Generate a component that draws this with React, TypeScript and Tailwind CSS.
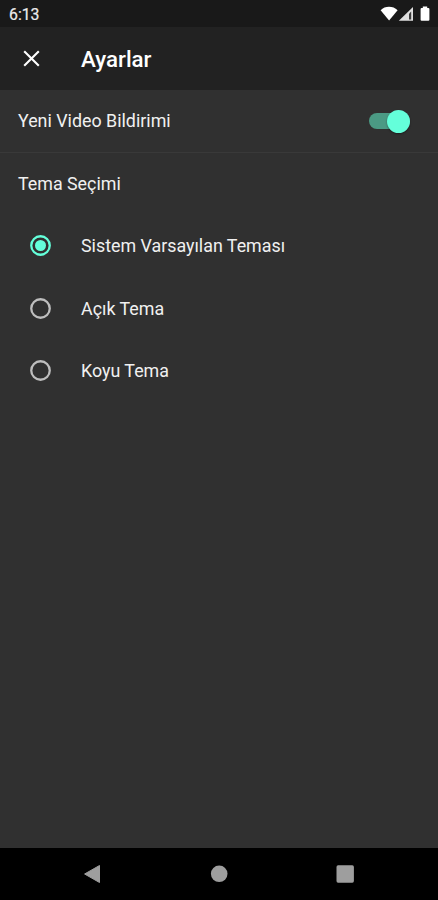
import { useState } from "react";

const themes = [
  { id: "system", label: "Sistem Varsayılan Teması" },
  { id: "light", label: "Açık Tema" },
  { id: "dark", label: "Koyu Tema" },
];

function StatusBar() {
  return (
    <div className="flex h-[27px] shrink-0 items-center justify-between bg-[#191919] pl-[9px] pr-2">
      <span className="pt-[3px] text-[15.8px] leading-none text-[#ececec] [-webkit-text-stroke:0.2px_#ececec]">
        6:13
      </span>
      <svg className="h-[27px] w-[50px]" viewBox="0 0 50 27" fill="#fff">
        <path d="M0.6 10.2C5 5.7 13 5.7 17.6 10.2L9.1 20.4Z" />
        <path d="M33 7v13.8H18.8Z" fill="#dedede" />
        <path d="M31.2 11.5v8h-2.2v-5.8Z" fill="#3a3a3a" />
        <path d="M42.8 6.4h4.4v1.6h1.2q1 0 1 1v10.8q0 1-1 1h-6.8q-1 0-1-1V9q0-1 1-1h1.2Z" />
      </svg>
    </div>
  );
}

function Header() {
  return (
    <header className="flex h-[63px] shrink-0 items-center bg-[#222222] pl-[23px]">
      <button className="flex w-[58px] items-center" aria-label="Kapat">
        <svg className="size-[17px]" viewBox="0 0 17 17" stroke="#fff" strokeWidth="2.1">
          <path d="M1.2 1.2 15.8 15.8M15.8 1.2 1.2 15.8" />
        </svg>
      </button>
      <h1 className="pt-0.5 text-[22.3px] font-medium leading-none text-white">Ayarlar</h1>
    </header>
  );
}

function Toggle({ on, onChange }: { on: boolean; onChange: () => void }) {
  return (
    <button
      role="switch"
      aria-checked={on}
      onClick={onChange}
      className={`flex h-4 w-[41px] items-center rounded-full ${on ? "justify-end bg-[#4b9a84]" : "bg-[#6b6b6b]"}`}
    >
      <span
        className={`size-[23px] shrink-0 rounded-full shadow-[0_1px_2px_rgba(0,0,0,0.4)] ${on ? "bg-[#64ffda]" : "bg-[#bdbdbd]"}`}
      />
    </button>
  );
}

function Radio({ checked }: { checked: boolean }) {
  return (
    <svg
      className={`size-[21px] ${checked ? "text-[#64ffda]" : "text-[#bebebe]"}`}
      viewBox="0 0 21 21"
      fill="none"
    >
      <circle cx="10.5" cy="10.5" r="9.25" stroke="currentColor" strokeWidth="2.3" />
      {checked && <circle cx="10.5" cy="10.5" r="5.5" fill="currentColor" />}
    </svg>
  );
}

function NavBar() {
  return (
    <nav className="h-[52px] shrink-0 bg-black">
      <svg className="h-[52px] w-full" viewBox="0 0 438 52" fill="#9e9e9e">
        <path d="M84.6 26 99.5 17.5v17Z" stroke="#9e9e9e" strokeLinejoin="round" />
        <circle cx="219.2" cy="25.8" r="8.3" />
        <rect x="336.5" y="17.3" width="17.4" height="17.4" rx="1.6" />
      </svg>
    </nav>
  );
}

export default function App() {
  const [notify, setNotify] = useState(true);
  const [theme, setTheme] = useState("system");

  return (
    <div className="flex h-screen w-full flex-col overflow-hidden bg-[#303030] font-['Roboto',sans-serif] text-[17.85px] leading-none text-[#f0f0f0]">
      <StatusBar />
      <Header />
      <main className="flex-1">
        <div className="flex h-[63px] items-center justify-between border-b border-[#393939] pl-[18px] pr-[28px]">
          <span>Yeni Video Bildirimi</span>
          <Toggle on={notify} onChange={() => setNotify(!notify)} />
        </div>
        <h2 className="flex h-[61px] items-center pl-[18px]">Tema Seçimi</h2>
        <div role="radiogroup">
          {themes.map((t) => (
            <button
              key={t.id}
              role="radio"
              aria-checked={theme === t.id}
              onClick={() => setTheme(t.id)}
              className="flex h-[62.4px] w-full items-center pl-[30px] pt-px"
            >
              <Radio checked={theme === t.id} />
              <span className="pl-[30px] pt-px">{t.label}</span>
            </button>
          ))}
        </div>
      </main>
      <NavBar />
    </div>
  );
}
